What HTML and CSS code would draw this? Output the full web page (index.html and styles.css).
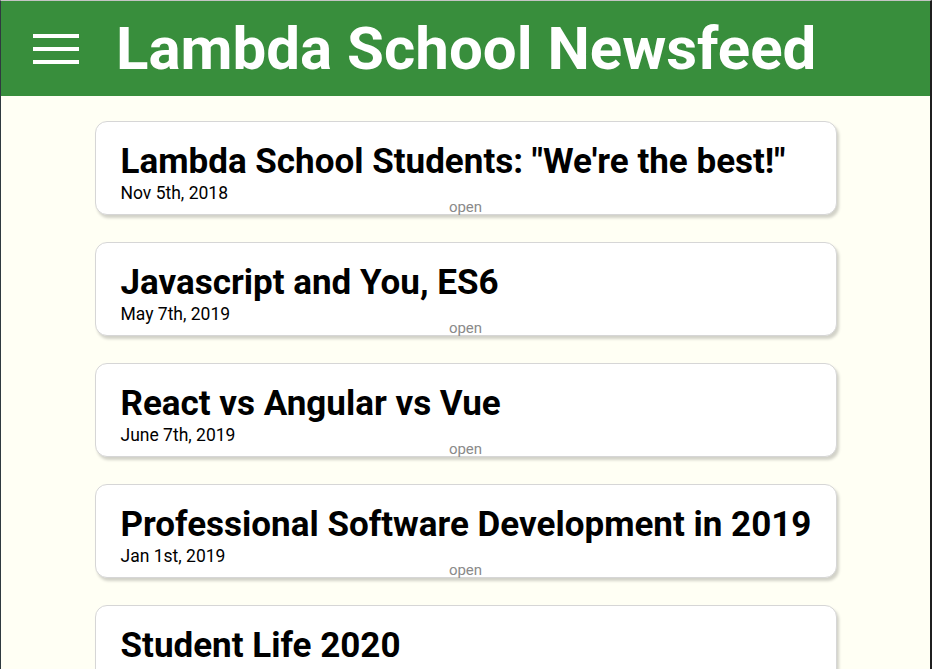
FILE: index.html
```html
<!DOCTYPE html>
<html lang="en">
<head>
<meta charset="utf-8">
<title>Lambda School Newsfeed</title>
<link rel="stylesheet" href="styles.css">
</head>
<body>
<div class="frame">
  <header class="header">
    <div class="menu-button" aria-label="menu">
      <span class="bar"></span>
      <span class="bar"></span>
      <span class="bar"></span>
    </div>
    <h1 class="header-title">Lambda School Newsfeed</h1>
  </header>
  <main class="articles">
    <article class="article">
      <h2 class="article-title">Lambda School Students: "We're the best!"</h2>
      <p class="date">Nov 5th, 2018</p>
      <span class="expand-button">open</span>
    </article>
    <article class="article">
      <h2 class="article-title">Javascript and You, ES6</h2>
      <p class="date">May 7th, 2019</p>
      <span class="expand-button">open</span>
    </article>
    <article class="article">
      <h2 class="article-title">React vs Angular vs Vue</h2>
      <p class="date">June 7th, 2019</p>
      <span class="expand-button">open</span>
    </article>
    <article class="article">
      <h2 class="article-title">Professional Software Development in 2019</h2>
      <p class="date">Jan 1st, 2019</p>
      <span class="expand-button">open</span>
    </article>
    <article class="article">
      <h2 class="article-title">Student Life 2020</h2>
      <p class="date">Jan 1st, 2020</p>
      <span class="expand-button">open</span>
    </article>
  </main>
</div>
</body>
</html>
```

FILE: styles.css
```css
html, body {
  margin: 0;
  padding: 0;
  height: 100%;
  overflow: hidden;
}

body {
  font-family: Roboto, "Noto Sans", Arial, sans-serif;
  background: #fffff4;
}

.frame {
  box-sizing: border-box;
  height: 669px;
  border-top: 1px solid #c4c4c4;
  border-left: 1px solid #2f3a3f;
  border-right: 2px solid #1f1f1f;
  background: #fffff4;
  overflow: hidden;
}

.header {
  display: flex;
  align-items: center;
  height: 95px;
  background: #388e3c;
  color: #fff;
}

.menu-button {
  display: flex;
  flex-direction: column;
  gap: 9px;
  margin-left: 32px;
  margin-right: 37px;
  width: 46px;
}

.bar {
  display: block;
  height: 4px;
  background: #fff;
}

.header-title {
  margin: 0;
  font-size: 60px;
  font-weight: 700;
  line-height: 1;
  letter-spacing: 0;
}

.articles {
  display: flex;
  flex-direction: column;
  align-items: center;
  gap: 27px;
  padding-top: 25px;
}

.article {
  box-sizing: border-box;
  width: 742px;
  height: 94px;
  flex-shrink: 0;
  background: #fff;
  border: 1px solid #d6d6d6;
  border-radius: 12px;
  box-shadow: 2px 3px 3px rgba(0, 0, 0, 0.18);
  padding: 20px 25px 0;
  display: flex;
  flex-direction: column;
}

.article-title {
  margin: 0;
  font-size: 35px;
  font-weight: 700;
  line-height: 40px;
  color: #000;
  white-space: nowrap;
}

.date {
  margin: 3px 0 0;
  font-size: 17.5px;
  line-height: 16px;
  color: #000;
}

.expand-button {
  align-self: center;
  margin-top: -2px;
  font-size: 15px;
  line-height: 16px;
  color: #8a8a8a;
}
```
